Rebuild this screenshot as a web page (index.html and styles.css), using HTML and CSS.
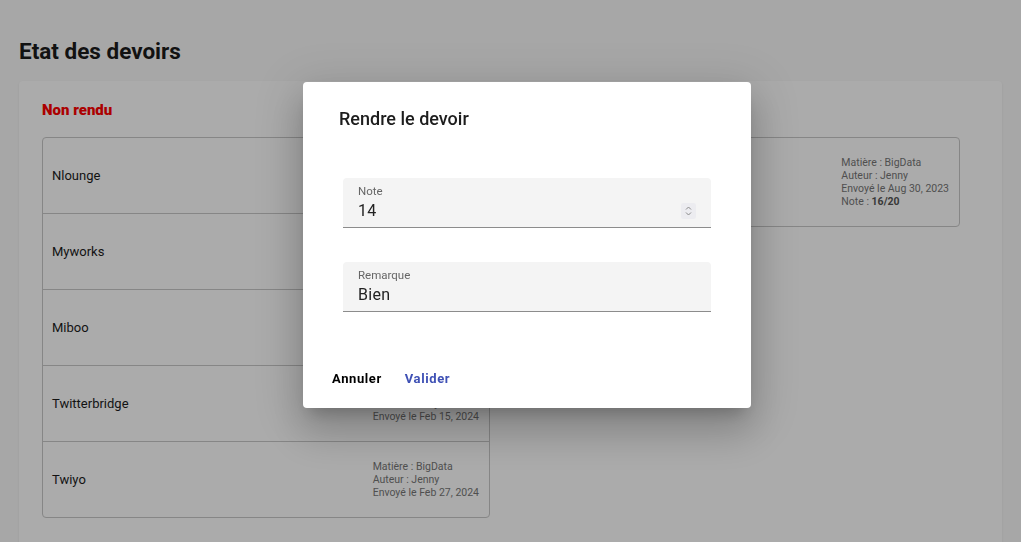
FILE: index.html
```html
<!DOCTYPE html>
<html lang="fr">
<head>
<meta charset="utf-8">
<title>Etat des devoirs</title>
<link rel="stylesheet" href="styles.css">
</head>
<body>
<div class="page">
  <h1 class="page-title">Etat des devoirs</h1>
  <div class="card">
    <div class="columns">
      <section class="column">
        <h2 class="col-title late">Non rendu</h2>
        <div class="list">
          <div class="row"><span class="name">Nlounge</span><div class="meta"><div>Matière : BigData</div><div>Auteur : Jenny</div><div>Envoyé le Jan 12, 2024</div></div></div>
          <div class="row"><span class="name">Myworks</span><div class="meta"><div>Matière : BigData</div><div>Auteur : Jenny</div><div>Envoyé le Jan 20, 2024</div></div></div>
          <div class="row"><span class="name">Miboo</span><div class="meta"><div>Matière : BigData</div><div>Auteur : Jenny</div><div>Envoyé le Feb 02, 2024</div></div></div>
          <div class="row"><span class="name">Twitterbridge</span><div class="meta"><div>Matière : BigData</div><div>Auteur : Jenny</div><div>Envoyé le Feb 15, 2024</div></div></div>
          <div class="row"><span class="name">Twiyo</span><div class="meta"><div>Matière : BigData</div><div>Auteur : Jenny</div><div>Envoyé le Feb 27, 2024</div></div></div>
        </div>
      </section>
      <section class="column">
        <h2 class="col-title done">Rendu</h2>
        <div class="list">
          <div class="row"><span class="name">Fivebridge</span><div class="meta"><div>Matière : BigData</div><div>Auteur : Jenny</div><div>Envoyé le Aug 30, 2023</div><div>Note : <b>16/20</b></div></div></div>
        </div>
      </section>
    </div>
  </div>
</div>

<div class="backdrop"></div>

<div class="dialog">
  <h2 class="dialog-title">Rendre le devoir</h2>
  <div class="dialog-body">
    <div class="field">
      <label class="field-label">Note</label>
      <div class="field-value">
        <span>14</span>
        <span class="spinner"><svg width="15" height="16" viewBox="0 0 15 16"><path d="M5 6.5 L7.5 4 L10 6.5" fill="none" stroke="#8a8a8a" stroke-width="1"/><path d="M5 9.5 L7.5 12 L10 9.5" fill="none" stroke="#8a8a8a" stroke-width="1"/></svg></span>
      </div>
    </div>
    <div class="field">
      <label class="field-label">Remarque</label>
      <div class="field-value"><span>Bien</span></div>
    </div>
  </div>
  <div class="dialog-actions">
    <button class="btn">Annuler</button>
    <button class="btn primary">Valider</button>
  </div>
</div>
</body>
</html>
```

FILE: styles.css
```css
* { box-sizing: border-box; }
html, body { margin: 0; height: 100%; }
body {
  background: #fafafa;
  font-family: Roboto, "Noto Sans", sans-serif;
  color: #212121;
  overflow: hidden;
}
.page { padding: 0 19px; }
.page-title {
  margin: 38px 0 17px;
  font-size: 22.5px;
  line-height: 26px;
  font-weight: 700;
  color: #1b1b1b;
}
.card {
  background: #fff;
  border-radius: 4px;
  box-shadow: 0 1px 3px rgba(0,0,0,.08);
  padding: 19px 23px 40px;
  min-height: 480px;
}
.columns {
  display: grid;
  grid-template-columns: 448px 448px;
  column-gap: 22px;
}
.col-title {
  margin: 0 0 17px;
  font-size: 15px;
  line-height: 20px;
  font-weight: 900;
}
.col-title.late { color: #ff0000; }
.col-title.done { color: #2e7d32; }
.list {
  border: 1px solid #c8c8c8;
  border-radius: 4px;
}
.row {
  display: flex;
  justify-content: space-between;
  align-items: center;
  padding: 18px 10px 18px 9px;
  border-bottom: 1px solid #c8c8c8;
}
.row:last-child { border-bottom: none; }
.name { font-size: 13px; line-height: 16px; color: #1c1c1c; }
.meta {
  font-size: 10.5px;
  line-height: 13px;
  color: #777;
}
.meta b { color: #555; }

.backdrop {
  position: fixed;
  inset: 0;
  background: rgba(0,0,0,.33);
}
.dialog {
  position: absolute;
  left: 303px;
  top: 82px;
  width: 448px;
  height: 326px;
  background: #fff;
  border-radius: 4px;
  box-shadow: 0 11px 15px -7px rgba(0,0,0,.2), 0 24px 38px 3px rgba(0,0,0,.14), 0 9px 46px 8px rgba(0,0,0,.12);
  padding: 25px 40px 0 36px;
}
.dialog-title {
  margin: 0;
  font-size: 18px;
  line-height: 24px;
  font-weight: 500;
  color: #1d1d1d;
}
.dialog-body {
  display: flex;
  flex-direction: column;
  gap: 34px;
  margin: 47px 0 0 4px;
}
.field {
  background: #f4f4f4;
  border-radius: 4px 4px 0 0;
  border-bottom: 1px solid #8c8c8c;
  padding: 6px 15px 6px 15px;
  height: 50px;
}
.field-label {
  display: block;
  font-size: 11.5px;
  line-height: 14px;
  color: #666;
}
.field-value {
  display: flex;
  justify-content: space-between;
  align-items: center;
  margin-top: 1px;
  font-size: 16px;
  line-height: 24px;
  color: #222;
  letter-spacing: .3px;
}
.spinner {
  display: flex;
  width: 15px;
  height: 16px;
  background: #ececf0;
  border-radius: 2px;
}
.dialog-actions {
  display: flex;
  gap: 7px;
  margin: 53px 0 0 -15px;
}
.btn {
  background: none;
  border: none;
  font-family: Roboto, sans-serif;
  font-size: 13px;
  font-weight: 700;
  letter-spacing: .6px;
  padding: 6px 8px;
  color: #000;
  cursor: pointer;
}
.btn.primary { color: #3f51b5; }
```
